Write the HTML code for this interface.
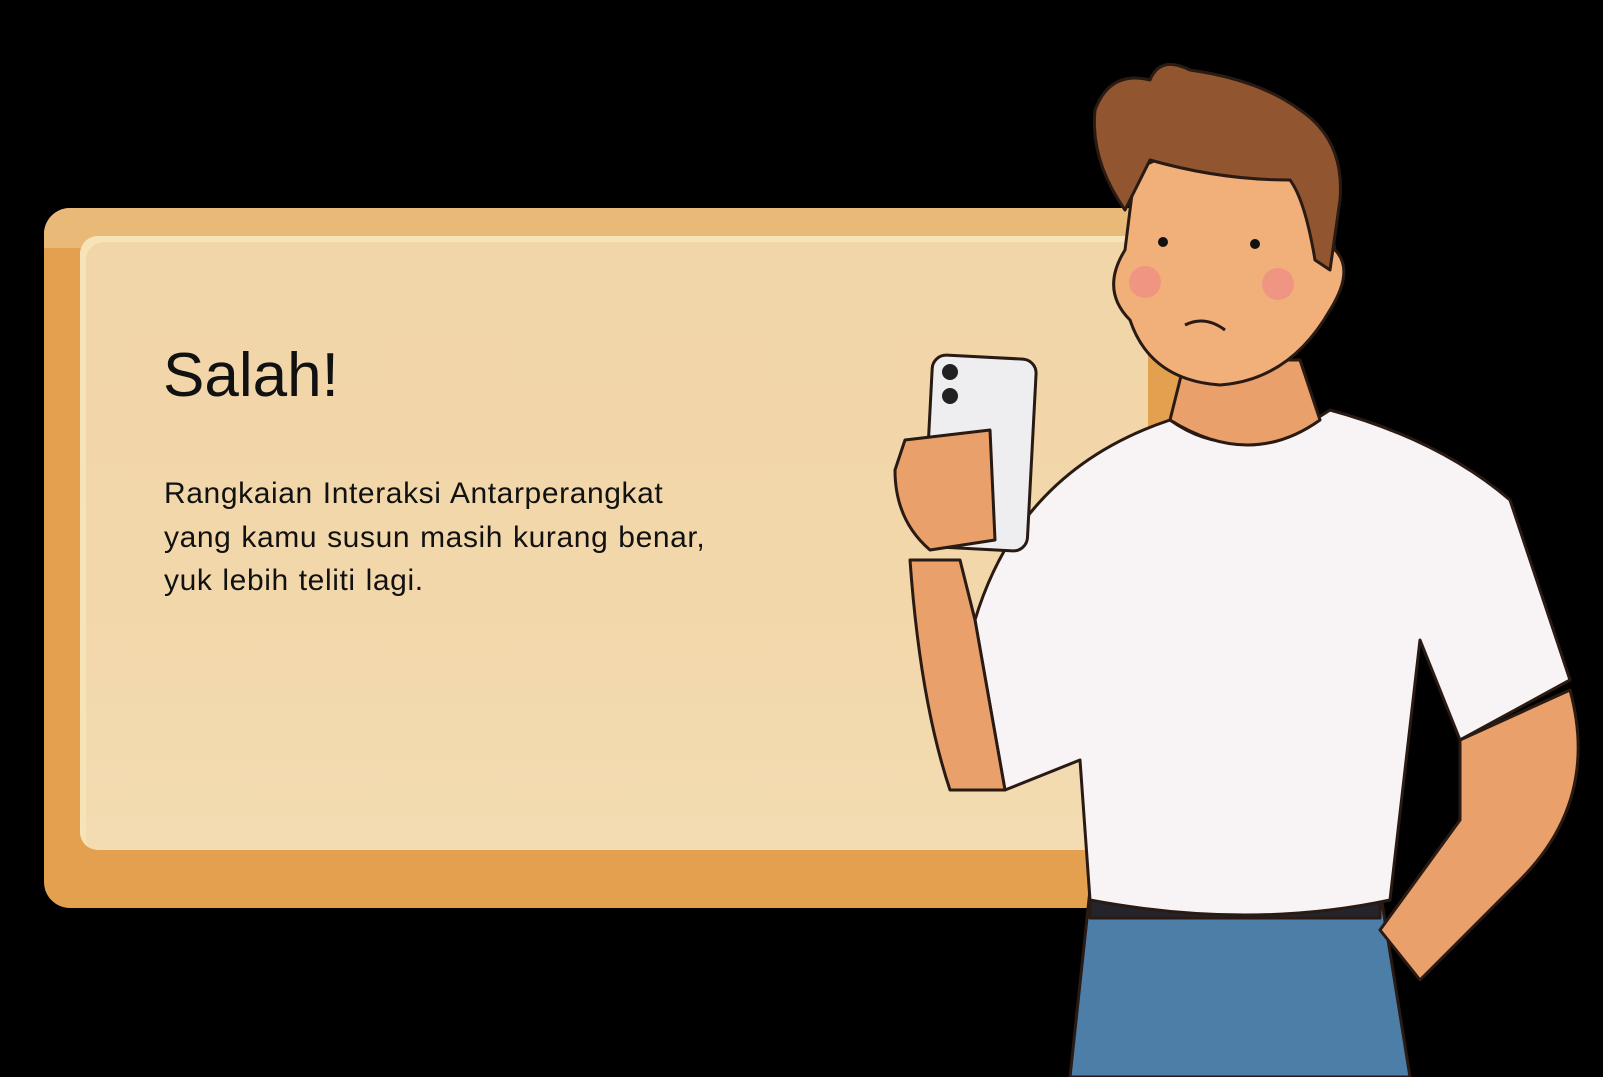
<!DOCTYPE html>
<html><head><meta charset="utf-8"><style>
html,body{margin:0;padding:0;background:#000;width:1603px;height:1077px;overflow:hidden;position:relative;font-family:"Liberation Sans",sans-serif}
.board{position:absolute;left:44px;top:208px;width:1140px;height:700px;border-radius:26px;background:#e3a04f;}
.inner{position:absolute;left:36px;top:28px;right:36px;bottom:58px;border-radius:18px;background:linear-gradient(180deg,#f1d6aa 0%,#f2d7aa 60%,#f3dcb2 100%);box-shadow:inset 6px 6px 0 #f6e4b8;}
.top{position:absolute;left:0;top:0;right:0;height:40px;border-radius:26px 26px 0 0;background:#e9b978}
h1{position:absolute;left:163px;top:340px;margin:0;font-weight:normal;font-size:62px;color:#111;letter-spacing:0}
p{position:absolute;left:164px;top:472px;margin:0;font-size:30px;line-height:43.5px;color:#111;letter-spacing:0.6px;word-spacing:1px}
svg{position:absolute;left:0;top:0}
</style></head><body>
<div class="board"><div class="top"></div><div class="inner"></div></div>
<h1>Salah!</h1>
<p>Rangkaian Interaksi Antarperangkat<br>yang kamu susun masih kurang benar,<br>yuk lebih teliti lagi.</p>
<svg width="1603" height="1077" viewBox="0 0 1603 1077">
<g stroke="#2a1a14" stroke-width="3" stroke-linejoin="round">
<path d="M1090 890 L1380 890 L1410 1077 L1070 1077 Z" fill="#4d7ea8"/>
<rect x="1090" y="888" width="290" height="30" fill="#24242c"/>
<path d="M1170 420 Q1240 470 1330 410 Q1440 440 1510 500 L1570 680 L1460 740 L1420 640 L1390 900 Q1250 930 1090 900 L1080 760 L1005 790 L975 620 Q1020 470 1170 420 Z" fill="#f8f3f4"/>
<path d="M1460 740 L1570 690 Q1600 800 1520 880 L1420 980 L1380 930 L1460 820 Z" fill="#e9a06a"/>
<path d="M975 620 L1005 790 L950 790 Q920 700 910 560 L960 560 Z" fill="#e9a06a"/>
<path d="M1185 360 L1300 360 L1320 420 Q1250 470 1170 420 Z" fill="#e9a06a"/>
<path d="M1135 170 Q1230 120 1320 170 L1335 250 Q1355 270 1330 310 Q1290 380 1220 385 Q1150 380 1130 320 Q1100 290 1125 250 Z" fill="#f1b07a"/>
<path d="M1095 110 Q1110 70 1150 80 Q1160 55 1190 70 Q1260 80 1300 110 Q1345 140 1340 200 L1330 270 L1315 260 Q1305 200 1290 180 Q1220 180 1150 160 L1125 210 Q1090 160 1095 110 Z" fill="#91552f"/>
<rect x="928" y="357" width="104" height="192" rx="14" fill="#eeeef0" transform="rotate(3 980 450)"/>
<path d="M905 440 L990 430 L995 540 L930 550 Q895 520 895 470 Z" fill="#e9a06a"/>
</g>
<circle cx="1163" cy="242" r="5" fill="#111"/><circle cx="1255" cy="244" r="5" fill="#111"/>
<circle cx="1145" cy="282" r="16" fill="#ee8a86" opacity=".7"/><circle cx="1278" cy="284" r="16" fill="#ee8a86" opacity=".7"/>
<path d="M1185 325 Q1205 315 1225 330" stroke="#2a1a14" stroke-width="3" fill="none"/>
<circle cx="950" cy="372" r="8" fill="#222"/><circle cx="950" cy="396" r="8" fill="#222"/>
</svg>
</body></html>
